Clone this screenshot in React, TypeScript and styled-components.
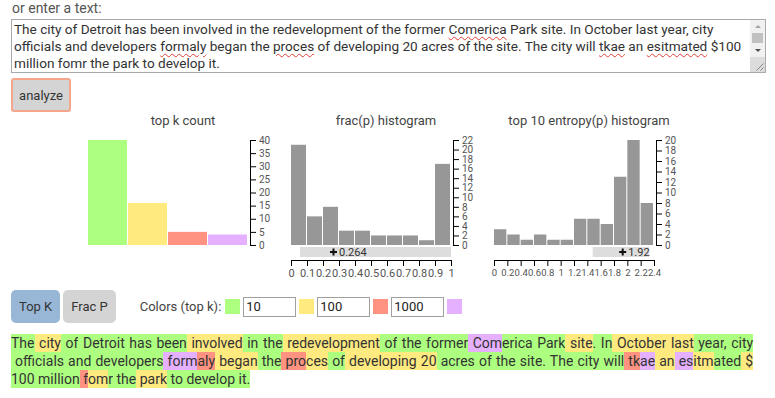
import React from "react";
import styled, { createGlobalStyle } from "styled-components";

const GlobalStyle = createGlobalStyle`
  body {
    margin: 0;
    background: #fff;
    font-family: Roboto, "Liberation Sans", sans-serif;
    color: #333;
  }
`;

const TOKEN_COLORS: Record<string, string> = {
  g: "#adff80",
  y: "#ffea80",
  r: "#ff9280",
  p: "#e5b0ff",
};

const Page = styled.div`
  padding: 0 9px 0 11px;
`;

const Label = styled.div`
  font-size: 14px;
  line-height: 17px;
  color: #555;
  padding-left: 1px;
`;

const TextBox = styled.div`
  display: flex;
  margin-top: 2px;
  height: 52px;
  border: 1px solid #aaa;
`;

const TextArea = styled.div`
  flex: 1;
  min-width: 0;
  padding: 1px 2px;
  overflow: hidden;
  font-size: 13.6px;
  line-height: 17px;
  color: #333;
  white-space: nowrap;
`;

const Misspelled = styled.span`
  text-decoration: underline wavy #e0403a;
  text-decoration-thickness: 1px;
  text-underline-offset: 2px;
`;

const ScrollRail = styled.div`
  flex: none;
  width: 15px;
  display: flex;
  flex-direction: column;
  background: #f1f1f1;
`;

const ScrollArrow = styled.div<{ $down?: boolean }>`
  height: ${(p) => (p.$down ? 14 : 13)}px;
  display: flex;
  align-items: center;
  justify-content: center;
  &::before {
    content: "";
    border-left: 3.5px solid transparent;
    border-right: 3.5px solid transparent;
    ${(p) =>
      p.$down
        ? "border-top: 3.5px solid #505050;"
        : "border-bottom: 3.5px solid #a3a3a3;"}
  }
`;

const ScrollThumb = styled.div`
  height: 10px;
  margin: 0 2px;
  background: #c1c1c1;
`;

const ScrollCorner = styled.div`
  height: 15px;
  background: #dcdcdc;
`;

const AnalyzeButton = styled.button`
  display: block;
  margin-top: 5px;
  width: 60px;
  height: 34px;
  background: #d4d4d4;
  border: 2px solid #f4a58c;
  border-radius: 3px;
  font-family: inherit;
  font-size: 13px;
  color: #333;
  padding: 0;
`;

const Charts = styled.div`
  display: flex;
  margin-left: 77px;
  height: 168px;
`;

const ChartSvg = styled.svg`
  overflow: visible;
  flex: none;
  font-family: Roboto, "Liberation Sans", sans-serif;
`;

const Controls = styled.div`
  display: flex;
  align-items: center;
  margin-top: 10px;
  height: 33px;
`;

const ModeButton = styled.button<{ $active?: boolean }>`
  height: 33px;
  padding: 0 8px;
  margin-right: 3px;
  border: none;
  border-radius: 5px;
  background: ${(p) => (p.$active ? "#98b7d6" : "#d4d4d4")};
  font-family: inherit;
  font-size: 13px;
  color: #333;
`;

const ColorsLabel = styled.span`
  margin-left: 21px;
  margin-right: 4px;
  font-size: 13px;
  color: #444;
`;

const Swatch = styled.span<{ $color: string }>`
  width: 15px;
  height: 15px;
  background: ${(p) => p.$color};
`;

const KInput = styled.input`
  box-sizing: border-box;
  width: 53px;
  height: 20px;
  margin: 0 3px;
  padding: 0 2px;
  border: 1px solid #a0a0a0;
  font-family: inherit;
  font-size: 13px;
  color: #222;
`;

const Result = styled.div`
  margin-top: 11px;
  width: 742px;
  font-size: 14px;
  line-height: 18px;
  color: #333;
  text-align: justify;
`;

const Line = styled.div<{ $last?: boolean }>`
  text-align-last: ${(p) => (p.$last ? "left" : "justify")};
`;

const Token = styled.span<{ $color: string }>`
  background: ${(p) => p.$color};
  padding: 1px 0;
`;

type Tok = [string, string];

const resultLines: Tok[][] = [
  [
    ["The", "g"], [" city", "y"], [" of", "g"], [" Detroit", "g"], [" has", "g"],
    [" been", "g"], [" involved", "y"], [" in", "g"], [" the", "g"],
    [" redevelopment", "y"], [" of", "g"], [" the", "g"], [" former", "g"],
    [" Com", "p"], ["erica", "g"], [" Park", "g"], [" site", "y"], [".", "g"],
    [" In", "g"], [" October", "y"], [" last", "y"], [" year", "g"], [",", "g"],
    [" city", "g"],
  ],
  [
    ["\u00a0officials", "g"], [" and", "g"], [" developers", "g"], [" form", "p"],
    ["aly", "r"], [" began", "y"], [" the", "g"], [" pro", "r"], ["ces", "y"],
    [" of", "g"], [" developing", "y"], [" 20", "y"], [" acres", "g"], [" of", "g"],
    [" the", "g"], [" site", "g"], [".", "g"], [" The", "g"], [" city", "g"],
    [" will", "g"], [" tk", "r"], ["ae", "p"], [" an", "y"], [" es", "p"],
    ["itm", "y"], ["ated", "g"], [" $", "y"],
  ],
  [
    ["100", "g"], [" million", "g"], [" f", "r"], ["om", "y"], ["r", "g"],
    [" the", "g"], [" park", "y"], [" to", "g"], [" develop", "g"], [" it", "g"],
    [".", "g"],
  ],
];

type Brush = { x0: number; x1: number; plus: number; label: string };

type ChartProps = {
  title: string;
  values: number[];
  colors?: string[];
  max: number;
  step: number;
  xLabels?: string[];
  xFontSize?: number;
  brush?: Brush;
};

const PLOT_W = 160;
const PLOT_H = 105;

const Chart = ({ title, values, colors, max, step, xLabels, xFontSize = 11, brush }: ChartProps) => {
  const bw = PLOT_W / values.length;
  const ticks: number[] = [];
  for (let t = 0; t <= max; t += step) ticks.push(t);
  const yOf = (v: number) => PLOT_H - (v * PLOT_H) / max;
  return (
    <ChartSvg width={203} height={168}>
      <text x={95} y={13} textAnchor="middle" fontSize={13} fill="#444">
        {title}
      </text>
      <g transform="translate(0,28)">
        {values.map((v, i) => (
          <rect
            key={i}
            x={i * bw}
            y={yOf(v)}
            width={bw - 1}
            height={PLOT_H - yOf(v)}
            fill={colors ? colors[i] : "#979797"}
          />
        ))}
        <g transform="translate(162,0)">
          <path d={`M6,0.5H0.5V${PLOT_H + 0.5}H6`} stroke="#000" fill="none" />
          {ticks.map((t) => (
            <g key={t} transform={`translate(0,${yOf(t) + 0.5})`}>
              <line x2={6} stroke="#000" />
              <text x={9} dy="0.32em" fontSize={10} fill="#555">
                {t}
              </text>
            </g>
          ))}
        </g>
        {brush && (
          <g>
            <rect x={brush.x0} y={107} width={brush.x1 - brush.x0} height={10} fill="#ddd" />
            <rect x={brush.plus - 3.5} y={111} width={7} height={2} fill="#111" />
            <rect x={brush.plus - 1} y={108.5} width={2} height={7} fill="#111" />
            <text x={brush.plus + 5.5} y={116} fontSize={11} fill="#333">
              {brush.label}
            </text>
          </g>
        )}
        {xLabels && (
          <g transform="translate(0,120)">
            <path d={`M0.5,6V0.5H${PLOT_W + 0.5}V6`} stroke="#000" fill="none" />
            {xLabels.map((l, i) => {
              const x = (i * PLOT_W) / (xLabels.length - 1) + 0.5;
              return (
                <g key={i} transform={`translate(${x},0)`}>
                  <line y2={6} stroke="#000" />
                  <text y={9} dy="0.71em" textAnchor="middle" fontSize={xFontSize} fill="#555">
                    {l}
                  </text>
                </g>
              );
            })}
          </g>
        )}
      </g>
    </ChartSvg>
  );
};

const fracLabels = ["0", "0.1", "0.2", "0.3", "0.4", "0.5", "0.6", "0.7", "0.8", "0.9", "1"];
const entLabels = ["0", "0.2", "0.4", "0.6", "0.8", "1", "1.2", "1.4", "1.6", "1.8", "2", "2.2", "2.4"];

const ResizeGrip = () => (
  <svg width={15} height={15}>
    <path d="M13.5 6.5L6.5 13.5M13.5 10.5L10.5 13.5" stroke="#888" strokeWidth={1} />
  </svg>
);

const App = () => {
  return (
    <Page>
      <GlobalStyle />
      <Label>or enter a text:</Label>
      <TextBox role="textbox">
        <TextArea>
          The city of Detroit has been involved in the redevelopment of the former{" "}
          <Misspelled>Comerica</Misspelled> Park site. In October last year, city
          <br />
          officials and developers <Misspelled>formaly</Misspelled> began the{" "}
          <Misspelled>proces</Misspelled> of developing 20 acres of the site. The city will{" "}
          <Misspelled>tkae</Misspelled> an <Misspelled>esitmated</Misspelled> $100
          <br />
          million fomr the park to develop it.
        </TextArea>
        <ScrollRail>
          <ScrollArrow />
          <ScrollThumb />
          <ScrollArrow $down />
          <ScrollCorner>
            <ResizeGrip />
          </ScrollCorner>
        </ScrollRail>
      </TextBox>
      <AnalyzeButton>analyze</AnalyzeButton>
      <Charts>
        <Chart
          title="top k count"
          values={[40, 16, 5, 4]}
          colors={[TOKEN_COLORS.g, TOKEN_COLORS.y, TOKEN_COLORS.r, TOKEN_COLORS.p]}
          max={40}
          step={5}
        />
        <Chart
          title="frac(p) histogram"
          values={[21, 6, 8, 3, 3, 2, 2, 2, 1, 17]}
          max={22}
          step={2}
          xLabels={fracLabels}
          brush={{ x0: 9, x1: 160, plus: 42.5, label: "0.264" }}
        />
        <Chart
          title="top 10 entropy(p) histogram"
          values={[3, 2, 1, 2, 1, 1, 5, 5, 4, 13, 20, 8]}
          max={20}
          step={2}
          xLabels={entLabels}
          xFontSize={9.5}
          brush={{ x0: 98.7, x1: 155.3, plus: 128.7, label: "1.92" }}
        />
      </Charts>
      <Controls>
        <ModeButton $active>Top K</ModeButton>
        <ModeButton>Frac P</ModeButton>
        <ColorsLabel>Colors (top k):</ColorsLabel>
        <Swatch $color={TOKEN_COLORS.g} />
        <KInput defaultValue="10" />
        <Swatch $color={TOKEN_COLORS.y} />
        <KInput defaultValue="100" />
        <Swatch $color={TOKEN_COLORS.r} />
        <KInput defaultValue="1000" />
        <Swatch $color={TOKEN_COLORS.p} />
      </Controls>
      <Result>
        {resultLines.map((line, li) => (
          <Line key={li} $last={li === resultLines.length - 1}>
            {line.map(([text, c], ti) => (
              <Token key={ti} $color={TOKEN_COLORS[c]}>
                {text}
              </Token>
            ))}
          </Line>
        ))}
      </Result>
    </Page>
  );
};

export default App;
